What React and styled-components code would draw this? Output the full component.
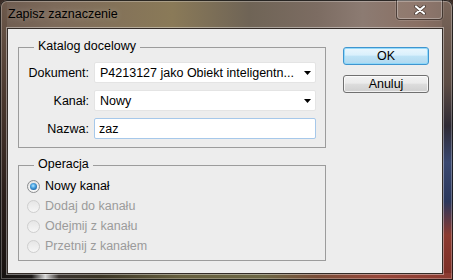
import React from 'react';
import styled, { createGlobalStyle } from 'styled-components';

const GlobalStyle = createGlobalStyle`
  html, body {
    margin: 0;
    padding: 0;
    width: 453px;
    height: 280px;
    overflow: hidden;
    background: #3a2c26;
  }
  body {
    font-family: "Liberation Sans", Arial, sans-serif;
    font-size: 12.5px;
    color: #000;
  }
`;

const Window = styled.div`
  box-sizing: border-box;
  width: 453px;
  height: 280px;
  display: flex;
  flex-direction: column;
  padding: 0 10px 6px 7px;
  border-radius: 7px 7px 0 0;
  box-shadow: inset 0 0 0 1px rgba(0, 0, 0, 0.75), inset 0 0 0 2px rgba(255, 255, 255, 0.28);
  background:
    linear-gradient(90deg, #151210 0, #1d1a18 7%, #d6d6d6 10%, #3a3430 13%, #3c3626 22%, #67603f 40%, #6d6846 58%, #7a4d38 70%, #98473a 84%, #8a3a30 100%) left bottom / 100% 7px no-repeat,
    linear-gradient(180deg, #7a665a 0, #5c4c44 30%, #2e2a34 45%, #3a4870 58%, #2b375c 72%, #8c3b30 84%, #7a2c24 100%) right top / 11px 100% no-repeat,
    linear-gradient(180deg, #6e5a4c 0, #4a382e 35%, #2a1e1a 70%, #171210 100%) left top / 7px 100% no-repeat,
    linear-gradient(90deg, #6e5c50 0, #7d6a5a 12%, #8a7a58 38%, #6f6456 55%, #7c6c62 70%, #8c7b72 80%, #8a7064 92%, #7a665c 100%) left top / 100% 30px no-repeat,
    #5a4a40;
`;

const TitleBar = styled.div`
  height: 28px;
  display: flex;
  align-items: flex-start;
  justify-content: space-between;
`;

const Title = styled.div`
  padding: 7px 0 0 1px;
  font-size: 12.5px;
  line-height: 15px;
  color: #000;
  text-shadow: 0 0 6px rgba(255, 255, 255, 0.35);
`;

const CloseButton = styled.div`
  box-sizing: border-box;
  width: 47px;
  height: 20px;
  display: flex;
  align-items: center;
  justify-content: center;
  border: 1px solid rgba(20, 14, 10, 0.55);
  border-top: none;
  border-radius: 0 0 4px 4px;
  background: rgba(255, 255, 255, 0.06);
  box-shadow: inset 0 0 0 1px rgba(255, 255, 255, 0.3), 0 0 0 1px rgba(255, 255, 255, 0.12);
`;

const Client = styled.div`
  box-sizing: border-box;
  height: 246px;
  display: flex;
  padding: 18px 13px 12px 10px;
  background: #ededed;
  border: 1px solid rgba(30, 22, 18, 0.9);
  box-shadow: 0 0 0 1px rgba(255, 255, 255, 0.4);
`;

const LeftColumn = styled.div`
  width: 308px;
  display: flex;
  flex-direction: column;
  gap: 17px;
`;

const Group = styled.div`
  position: relative;
  box-sizing: border-box;
  border: 1px solid #9c9c9c;
`;

const Caption = styled.div`
  position: absolute;
  top: -9px;
  left: 15px;
  padding: 0 4px;
  line-height: 15px;
  background: #ededed;
`;

const FieldGrid = styled(Group)`
  display: grid;
  grid-template-columns: 62px 222px;
  grid-auto-rows: 21px;
  column-gap: 5px;
  row-gap: 7px;
  align-items: center;
  padding: 14px 9px 8px 8px;
`;

const Label = styled.div`
  text-align: right;
  white-space: nowrap;
`;

const Combo = styled.div`
  box-sizing: border-box;
  height: 21px;
  display: flex;
  align-items: center;
  justify-content: space-between;
  padding: 0 4px 0 5px;
  background: #fff;
  border: 1px solid #e4e4e4;
  border-radius: 2px;
  white-space: nowrap;
`;

const TextInput = styled.input`
  box-sizing: border-box;
  width: 222px;
  height: 21px;
  margin: 0;
  padding: 0 4px;
  font: inherit;
  color: #000;
  background: #fff;
  border: 1px solid #a6c8ea;
  border-radius: 2px;
  outline: none;
`;

const RadioGroup = styled(Group)`
  display: flex;
  flex-direction: column;
  padding: 10px 8px 4px 8px;
`;

const RadioRow = styled.div`
  height: 20px;
  display: flex;
  align-items: center;
  gap: 5px;
  color: ${(p) => (p.$disabled ? '#9b9b9b' : '#000')};
`;

const RadioDot = styled.span`
  box-sizing: border-box;
  width: 13px;
  height: 13px;
  flex: none;
  display: flex;
  align-items: center;
  justify-content: center;
  border-radius: 50%;
  border: 1px solid ${(p) => (p.$checked ? '#8a8c8e' : '#cfcfcf')};
  background: ${(p) =>
    p.$checked
      ? 'linear-gradient(180deg, #e4e4e4, #f8f8f8)'
      : 'linear-gradient(180deg, #e6e6e6, #f6f6f6)'};

  &::after {
    content: '';
    display: ${(p) => (p.$checked ? 'block' : 'none')};
    width: 7px;
    height: 7px;
    border-radius: 50%;
    background: radial-gradient(circle at 45% 40%, #b8e6ff 0, #4fa8e4 35%, #1c65a8 75%, #0e3f74 100%);
  }
`;

const ButtonColumn = styled.div`
  display: flex;
  flex-direction: column;
  gap: 10px;
  margin-left: 17px;
`;

const Button = styled.button`
  box-sizing: border-box;
  width: 86px;
  height: 18px;
  margin: 0;
  padding: 0;
  font: inherit;
  line-height: 16px;
  color: #000;
  border-radius: 3px;
  border: 1px solid ${(p) => (p.$primary ? '#3f95cf' : '#707070')};
  background: ${(p) =>
    p.$primary
      ? 'linear-gradient(180deg, #eaf6fd 0, #d9f0fc 45%, #bee3f6 50%, #b0d8ef 100%)'
      : 'linear-gradient(180deg, #f2f2f2 0, #ebebeb 45%, #dddddd 50%, #cfcfcf 100%)'};
  box-shadow: inset 0 0 0 1px ${(p) => (p.$primary ? 'rgba(140, 215, 250, 0.9)' : 'rgba(255, 255, 255, 0.7)')};
`;

const Arrow = () => (
  <svg width="7" height="4" viewBox="0 0 7 4">
    <polygon points="0,0 7,0 3.5,4" fill="#000" />
  </svg>
);

const CloseGlyph = () => (
  <svg width="12" height="10" viewBox="0 0 12 10">
    <path d="M2 1.5 L10 8.5 M10 1.5 L2 8.5" stroke="rgba(30,20,15,0.7)" strokeWidth="3.6" strokeLinecap="round" />
    <path d="M2 1.5 L10 8.5 M10 1.5 L2 8.5" stroke="#fff" strokeWidth="2.2" strokeLinecap="round" />
  </svg>
);

const operations = [
  { label: 'Nowy kanał', checked: true },
  { label: 'Dodaj do kanału', disabled: true },
  { label: 'Odejmij z kanału', disabled: true },
  { label: 'Przetnij z kanałem', disabled: true },
];

export default function App() {
  return (
    <>
      <GlobalStyle />
      <Window>
        <TitleBar>
          <Title>Zapisz zaznaczenie</Title>
          <CloseButton>
            <CloseGlyph />
          </CloseButton>
        </TitleBar>
        <Client>
          <LeftColumn>
            <FieldGrid>
              <Caption>Katalog docelowy</Caption>
              <Label>Dokument:</Label>
              <Combo>
                <span>P4213127 jako Obiekt inteligentn...</span>
                <Arrow />
              </Combo>
              <Label>Kanał:</Label>
              <Combo>
                <span>Nowy</span>
                <Arrow />
              </Combo>
              <Label>Nazwa:</Label>
              <TextInput value="zaz" readOnly />
            </FieldGrid>
            <RadioGroup>
              <Caption>Operacja</Caption>
              {operations.map((op) => (
                <RadioRow key={op.label} $disabled={op.disabled}>
                  <RadioDot $checked={op.checked} />
                  {op.label}
                </RadioRow>
              ))}
            </RadioGroup>
          </LeftColumn>
          <ButtonColumn>
            <Button $primary>OK</Button>
            <Button>Anuluj</Button>
          </ButtonColumn>
        </Client>
      </Window>
    </>
  );
}
